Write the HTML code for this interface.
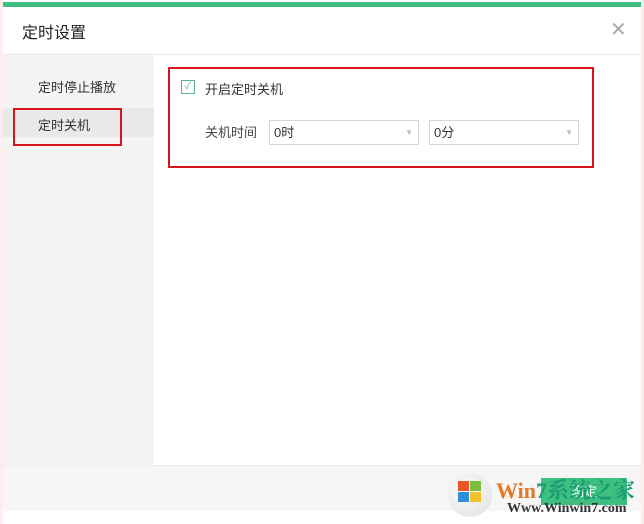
<!DOCTYPE html>
<html><head><meta charset="utf-8"><style>
body{margin:0;width:644px;height:524px;background:#fbeeee;position:relative;overflow:hidden;font-family:"Liberation Sans","Noto Sans CJK SC",sans-serif;color:#333}
.abs{position:absolute}
</style></head><body>
<div class="abs" style="left:3px;top:0;width:638px;height:524px;background:#fff"></div>
<div class="abs" style="left:3px;top:2px;width:638px;height:5px;background:#3fbf7f"></div>
<div class="abs" style="left:22px;top:19px;font-size:16px;color:#222">定时设置</div>
<div class="abs" style="left:610px;top:17px;font-size:20px;color:#aaa;font-weight:300">✕</div>
<div class="abs" style="left:3px;top:54px;width:638px;height:1px;background:#e8e8e8"></div>
<div class="abs" style="left:3px;top:55px;width:151px;height:410px;background:#f4f4f4"></div>
<div class="abs" style="left:3px;top:108px;width:151px;height:29px;background:#e9e9e9"></div>
<div class="abs" style="left:38px;top:77px;font-size:13px">定时停止播放</div>
<div class="abs" style="left:38px;top:115px;font-size:13px">定时关机</div>
<div class="abs" style="left:13px;top:108px;width:105px;height:34px;border:2px solid #d9141b"></div>
<div class="abs" style="left:168px;top:67px;width:422px;height:97px;border:2px solid #d9141b"></div>
<div class="abs" style="left:181px;top:80px;width:12px;height:12px;border:1px solid #5bb58a;color:#5bb58a;font-size:10px;line-height:12px;text-align:center">✓</div>
<div class="abs" style="left:205px;top:79px;font-size:13px">开启定时关机</div>
<div class="abs" style="left:205px;top:122px;font-size:13px;color:#444">关机时间</div>
<div class="abs" style="left:269px;top:120px;width:148px;height:23px;border:1px solid #d6d6d6;font-size:13px;line-height:23px;text-indent:4px">0时<span style="position:absolute;right:5px;top:0;font-size:8px;color:#bbb">▼</span></div>
<div class="abs" style="left:429px;top:120px;width:148px;height:23px;border:1px solid #d6d6d6;font-size:13px;line-height:23px;text-indent:4px">0分<span style="position:absolute;right:5px;top:0;font-size:8px;color:#bbb">▼</span></div>
<div class="abs" style="left:3px;top:465px;width:638px;height:45px;background:#f6f6f6;border-top:1px solid #ececec"></div>
<div class="abs" style="left:541px;top:478px;width:86px;height:27px;background:#3fbf7f;color:#fff;font-size:13px;line-height:27px;text-align:center">确定</div>
<div class="abs" style="left:448px;top:473px;width:44px;height:44px;border-radius:50%;background:radial-gradient(circle at 40% 40%,#fff,#ddd)"></div>
<div class="abs" style="left:458px;top:481px;width:11px;height:10px;background:#e8552a"></div>
<div class="abs" style="left:470px;top:481px;width:11px;height:10px;background:#7cbf3a"></div>
<div class="abs" style="left:458px;top:492px;width:11px;height:10px;background:#2e8fd8"></div>
<div class="abs" style="left:470px;top:492px;width:11px;height:10px;background:#f3c12b"></div>
<div class="abs" style="left:496px;top:474px;font-size:22px;font-weight:bold;font-family:'Liberation Serif','Noto Serif CJK SC',serif;color:#e07a2a">Win<span style="color:#1a9c74">7系统之家</span></div>
<div class="abs" style="left:507px;top:501px;font-size:14px;font-weight:bold;font-family:'Liberation Serif',serif;color:#333">Www.Winwin7.com</div>
</body></html>
